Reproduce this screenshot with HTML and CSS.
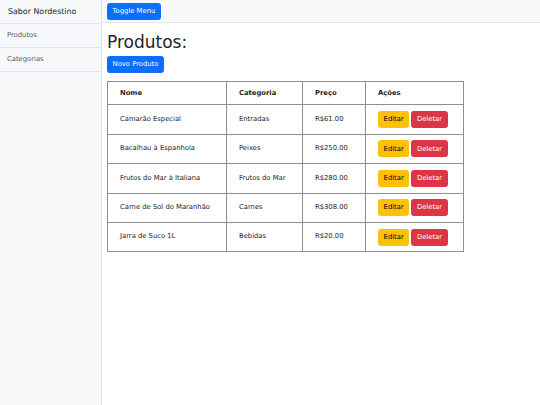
FILE: index.html
```html
<!DOCTYPE html>
<html lang="pt-BR">
<head>
<meta charset="utf-8">
<title>Sabor Nordestino</title>
<link rel="stylesheet" href="styles.css">
</head>
<body>
<div class="wrapper">
  <aside class="sidebar">
    <div class="sidebar-heading">Sabor Nordestino</div>
    <nav class="menu">
      <a class="menu-item" href="#">Produtos</a>
      <a class="menu-item" href="#">Categorias</a>
    </nav>
  </aside>
  <div class="page">
    <header class="topbar">
      <button class="btn btn-primary">Toggle Menu</button>
    </header>
    <main class="content">
      <h1 class="title">Produtos:</h1>
      <button class="btn btn-primary">Novo Produto</button>
      <table class="products">
        <thead>
          <tr><th class="c-name">Nome</th><th class="c-cat">Categoria</th><th class="c-price">Preço</th><th class="c-act">Ações</th></tr>
        </thead>
        <tbody>
          <tr><td>Camarão Especial</td><td>Entradas</td><td>R$61.00</td><td><div class="actions"><button class="btn btn-warning">Editar</button><button class="btn btn-danger">Deletar</button></div></td></tr>
          <tr><td>Bacalhau à Espanhola</td><td>Peixes</td><td>R$250.00</td><td><div class="actions"><button class="btn btn-warning">Editar</button><button class="btn btn-danger">Deletar</button></div></td></tr>
          <tr><td>Frutos do Mar à Italiana</td><td>Frutos do Mar</td><td>R$280.00</td><td><div class="actions"><button class="btn btn-warning">Editar</button><button class="btn btn-danger">Deletar</button></div></td></tr>
          <tr><td>Carne de Sol do Maranhão</td><td>Carnes</td><td>R$308.00</td><td><div class="actions"><button class="btn btn-warning">Editar</button><button class="btn btn-danger">Deletar</button></div></td></tr>
          <tr><td>Jarra de Suco 1L</td><td>Bebidas</td><td>R$20.00</td><td><div class="actions"><button class="btn btn-warning">Editar</button><button class="btn btn-danger">Deletar</button></div></td></tr>
        </tbody>
      </table>
    </main>
  </div>
</div>
</body>
</html>
```
FILE: styles.css
```css
* { box-sizing: border-box; }
html, body { margin: 0; padding: 0; height: 100%; }
body {
  font-family: "DejaVu Sans", sans-serif;
  font-size: 6.8px;
  line-height: 1.4;
  color: #212529;
  background: #fff;
}
.wrapper { display: flex; min-height: 405px; }
.sidebar {
  width: 102px;
  flex: none;
  background: #f8f9fa;
  border-right: 1px solid #dee2e6;
}
.sidebar-heading {
  height: 24px;
  padding: 0 8px;
  display: flex;
  align-items: center;
  font-size: 7.9px;
  color: #212529;
  border-bottom: 1px solid #e3e6e9;
}
.menu { display: flex; flex-direction: column; }
.menu-item {
  height: 24px;
  display: flex;
  align-items: center;
  padding: 0 7px;
  color: #555a5f;
  text-decoration: none;
  border-bottom: 1px solid #e3e6e9;
  background: #f8f9fa;
}
.page { flex: 1; display: flex; flex-direction: column; }
.topbar {
  height: 23px;
  padding: 3px 5px 0;
  background: #f8f9fa;
  border-bottom: 1px solid #e3e6e9;
}
.content { padding: 9px 5px; }
.title {
  margin: 0 0 4px;
  font-size: 17px;
  font-weight: 400;
  line-height: 1.2;
  color: #212529;
}
.btn {
  display: inline-flex;
  align-items: center;
  justify-content: center;
  font-family: inherit;
  font-size: 6.8px;
  line-height: 1;
  padding: 0 4.6px;
  border: 1px solid transparent;
  border-radius: 2.5px;
  cursor: pointer;
  height: 17px;
}
.btn-primary { background: #0d6efd; border-color: #0d6efd; color: #fff; }
.btn-warning { background: #ffc107; border-color: #ffc107; color: #000; }
.btn-danger { background: #dc3545; border-color: #dc3545; color: #fff; }
.products {
  margin-top: 8px;
  border-collapse: collapse;
  width: 357px;
  border: 1px solid #8f8f8f;
}
.products th, .products td {
  border: 1px solid #8f8f8f;
  text-align: left;
  padding: 0 12px;
  vertical-align: middle;
}
.products th { font-weight: 700; height: 23px; }
.products td { height: 29.4px; }
.c-name { width: 119px; }
.c-cat { width: 76px; }
.c-price { width: 63px; }
.actions { display: flex; gap: 2px; }
```
